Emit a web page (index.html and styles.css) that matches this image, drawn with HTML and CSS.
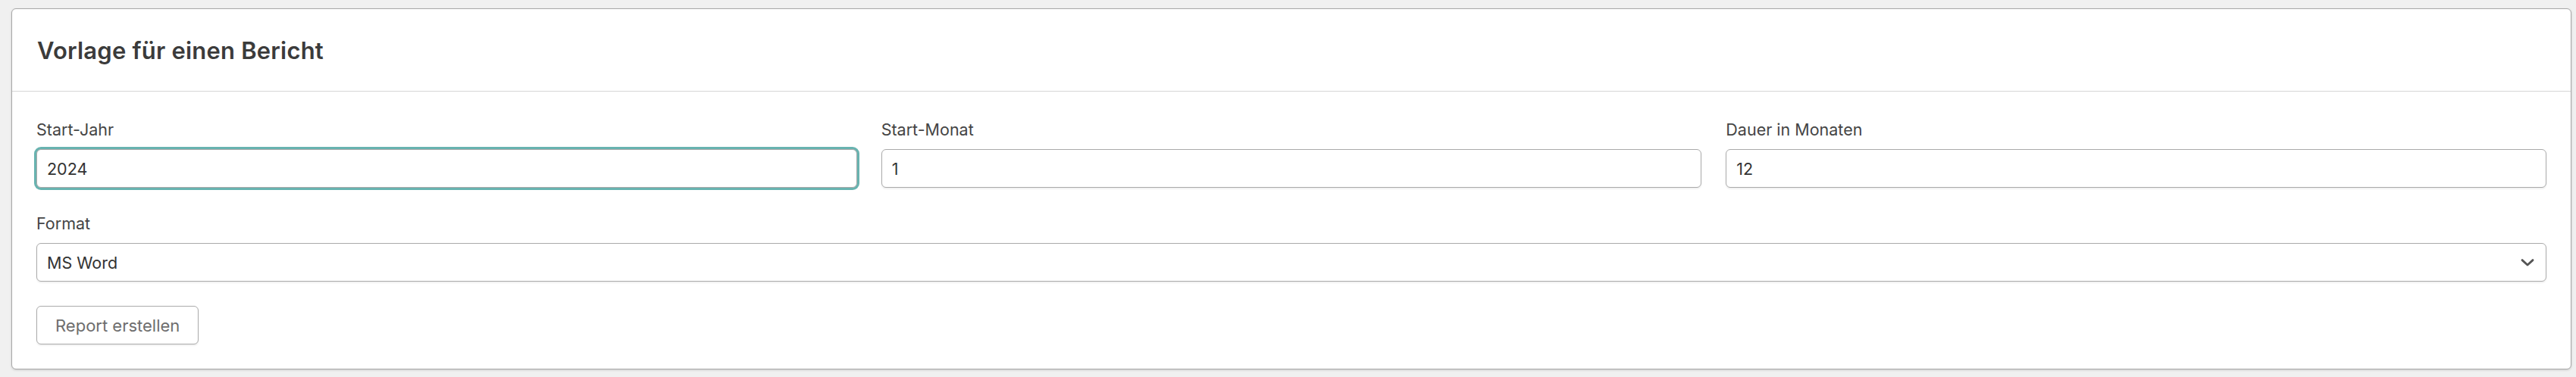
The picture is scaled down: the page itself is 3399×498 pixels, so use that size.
FILE: index.html
```html
<!DOCTYPE html>
<html lang="de">
<head>
<meta charset="utf-8">
<title>Vorlage für einen Bericht</title>
<link rel="stylesheet" href="styles.css">
</head>
<body>
<div class="card">
  <div class="card-header">
    <h1 class="card-title">Vorlage für einen Bericht</h1>
  </div>
  <div class="card-body">
    <div class="form-row">
      <div class="form-group">
        <label class="form-label">Start-Jahr</label>
        <input class="form-control is-focused" type="text" value="2024">
      </div>
      <div class="form-group">
        <label class="form-label">Start-Monat</label>
        <input class="form-control" type="text" value="1">
      </div>
      <div class="form-group">
        <label class="form-label">Dauer in Monaten</label>
        <input class="form-control" type="text" value="12">
      </div>
    </div>
    <div class="form-group">
      <label class="form-label">Format</label>
      <div class="select-wrap">
        <select class="form-control form-select">
          <option>MS Word</option>
        </select>
        <svg class="chevron" width="18" height="10" viewBox="0 0 18 10"><polyline points="2,1.6 9,8 16,1.6" fill="none" stroke="#555" stroke-width="2.8" stroke-linecap="round" stroke-linejoin="round"/></svg>
      </div>
    </div>
    <button class="btn" type="button">Report erstellen</button>
  </div>
</div>
</body>
</html>
```
FILE: styles.css
```css
* { box-sizing: border-box; }
body {
  margin: 0;
  background: #f0f0f0;
  padding: 11px 6px 10px 15px;
  font-family: Inter, Roboto, "Liberation Sans", sans-serif;
  color: #444;
}
.card {
  background: #fff;
  border: 1px solid #a8a8a8;
  border-radius: 6px;
  box-shadow: 0 1px 3px rgba(0,0,0,0.16);
}
.card-header {
  height: 109px;
  border-bottom: 1px solid #d6d6d6;
  display: flex;
  align-items: center;
  padding: 0 33px;
}
.card-title {
  margin: 0;
  font-size: 31px;
  font-weight: 600;
  color: #3b3b3b;
  letter-spacing: 0.2px;
}
.card-body {
  padding: 35px 32px 32px 32px;
}
.form-row {
  display: grid;
  grid-template-columns: 1fr 1fr 1fr;
  column-gap: 32px;
}
.form-group {
  margin-bottom: 32px;
}
.form-label {
  display: block;
  font-size: 21.5px;
  line-height: 30px;
  color: #454545;
  margin-bottom: 11px;
}
.form-control {
  display: block;
  width: 100%;
  height: 51px;
  border: 1px solid #aaaaaa;
  border-radius: 6px;
  background: #fff;
  padding: 0 13px;
  font-family: Inter, Roboto, "Liberation Sans", sans-serif;
  font-size: 21.5px;
  color: #333;
  box-shadow: 0 2px 2px rgba(0,0,0,0.06);
  outline: none;
}
.form-control.is-focused {
  box-shadow: 0 0 0 3px #68b3b0;
}
.select-wrap {
  position: relative;
}
.form-select {
  appearance: none;
  -webkit-appearance: none;
}
.chevron {
  position: absolute;
  right: 16px;
  top: 21px;
}
.btn {
  display: block;
  height: 51px;
  border: 1px solid #aaaaaa;
  border-radius: 6px;
  background: #fff;
  font-family: Inter, Roboto, "Liberation Sans", sans-serif;
  font-size: 22px;
  color: #6e6e6e;
  padding: 0 24px;
  white-space: nowrap;
  box-shadow: 0 2px 2px rgba(0,0,0,0.06);
}
```
